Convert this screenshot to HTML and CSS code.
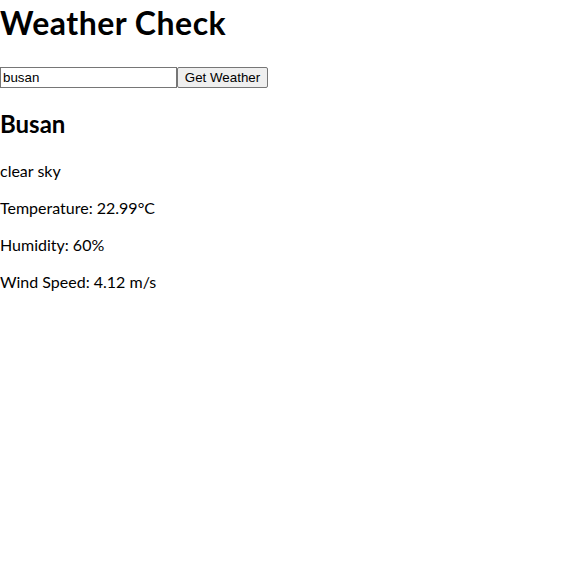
FILE: index.html
```html
<!DOCTYPE html>
<html>
<head>
<meta charset="utf-8">
<title>Weather Check</title>
<link rel="stylesheet" href="styles.css">
</head>
<body>
<h1 class="title">Weather Check</h1>
<div class="search">
  <input class="city-input" type="text" value="busan">
  <button class="fetch-btn">Get Weather</button>
</div>
<div class="result">
  <h2 class="city">Busan</h2>
  <p class="line">clear sky</p>
  <p class="line">Temperature: 22.99°C</p>
  <p class="line">Humidity: 60%</p>
  <p class="line">Wind Speed: 4.12 m/s</p>
</div>
</body>
</html>
```
FILE: styles.css
```css
body {
  margin: 0;
  font-family: Lato, "Open Sans", sans-serif;
  color: #000;
  background: #fff;
}
.title {
  margin: 0 0 21px;
  font-size: 32px;
  line-height: 46px;
  font-weight: 700;
  letter-spacing: 0.5px;
}
.search {
  display: flex;
  height: 21px;
  margin: 0 0 20px;
}
.city-input {
  width: 177px;
  height: 21px;
  box-sizing: border-box;
  margin: 0;
  padding: 1px 2px;
  border: 1px solid #767676;
  border-radius: 0;
  font-family: "Liberation Sans", Arial, sans-serif;
  font-size: 13.33px;
  color: #000;
  background: #fff;
}
.fetch-btn {
  height: 21px;
  width: 91px;
  box-sizing: border-box;
  margin: 0;
  padding: 1px 6px;
  border: 1px solid #767676;
  border-radius: 2px;
  background: #efefef;
  font-family: "Liberation Sans", Arial, sans-serif;
  font-size: 13.33px;
  color: #000;
}
.city {
  margin: 0 0 20px;
  font-size: 24px;
  line-height: 32px;
  font-weight: 700;
}
.line {
  margin: 0 0 16px;
  font-size: 16px;
  line-height: 21px;
}
```
